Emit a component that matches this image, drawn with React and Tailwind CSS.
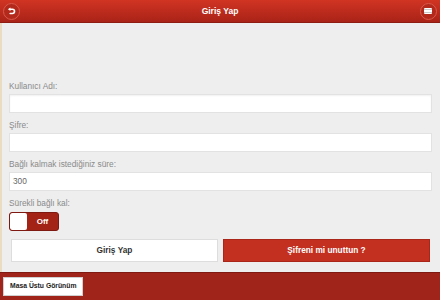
export default function App() {
  const font = { fontFamily: '"Liberation Sans", Arial, sans-serif' };
  return (
    <div className="w-[440px] h-[300px] flex flex-col bg-[#eeeeee] overflow-hidden" style={font}>
      <div className="h-[23px] shrink-0 flex items-center justify-between px-[3px] bg-gradient-to-b from-[#d13423] to-[#a92317] border-b border-[#8e1c12]">
        <div className="w-[17px] h-[17px] rounded-full bg-[#b32a1c] border border-[#d9584a] flex items-center justify-center">
          <svg width="9" height="9" viewBox="0 0 10 10" fill="none">
            <path d="M3 2.5 H6 A2.3 2.3 0 0 1 6 7.2 H3.5" stroke="white" strokeWidth="1.8" strokeLinecap="round" />
            <path d="M1 2.5 L3.8 0.5 V4.5 Z" fill="white" />
          </svg>
        </div>
        <div className="text-white font-bold text-[8.5px]">Giriş Yap</div>
        <div className="w-[17px] h-[17px] rounded-full bg-[#b32a1c] border border-[#d9584a] flex items-center justify-center">
          <div className="w-[8px] h-[6px] bg-white rounded-[1px] flex flex-col justify-between py-[1px]">
            <div className="h-px bg-[#c9c9c9]" />
            <div className="h-px bg-[#c9c9c9]" />
          </div>
        </div>
      </div>
      <div className="flex-1 flex flex-col border-l-[2px] border-[#e9dcc0] pl-[7px] pr-[8px] pt-[57px]">
        <div className="text-[8.3px] text-[#8a8a8a] leading-[12px] mb-[2px]">Kullanıcı Adı:</div>
        <div className="h-[19px] bg-white border border-[#e2e2e2] shadow-[inset_0_1px_2px_rgba(0,0,0,0.06)]" />
        <div className="text-[8.3px] text-[#8a8a8a] leading-[12px] mt-[6px] mb-[2px]">Şifre:</div>
        <div className="h-[19px] bg-white border border-[#e2e2e2]" />
        <div className="text-[8.3px] text-[#8a8a8a] leading-[12px] mt-[6px] mb-[2px]">Bağlı kalmak istediğiniz süre:</div>
        <div className="h-[19px] bg-white border border-[#e2e2e2] flex items-center px-[3px] text-[8.3px] text-[#666]">300</div>
        <div className="text-[8.3px] text-[#8a8a8a] leading-[12px] mt-[6px] mb-[3px]">Sürekli bağlı kal:</div>
        <div className="w-[50px] h-[19px] rounded-[3px] bg-[#a42317] border border-[#7d1910] flex overflow-hidden">
          <div className="w-[17px] h-full bg-white rounded-[2px]" />
          <div className="flex-1 flex items-center justify-center text-white font-bold text-[8px]">Off</div>
        </div>
        <div className="flex gap-[5px] mt-[8px] px-[2px]">
          <div className="flex-1 h-[23px] bg-white border border-[#dddddd] flex items-center justify-center text-[8.3px] font-bold text-[#333]">Giriş Yap</div>
          <div className="flex-1 h-[23px] bg-[#c3301f] border border-[#a92619] flex items-center justify-center text-[8.3px] font-bold text-white">Şifreni mi unuttun ?</div>
        </div>
      </div>
      <div className="h-[28px] shrink-0 bg-[#a0241a] border-t border-[#7e1a11] flex items-center px-[3px]">
        <div className="h-[19px] px-[6px] bg-white border border-[#d0d0d0] flex items-center text-[6.8px] font-bold text-[#222]">Masa Üstu Görünüm</div>
      </div>
    </div>
  );
}
